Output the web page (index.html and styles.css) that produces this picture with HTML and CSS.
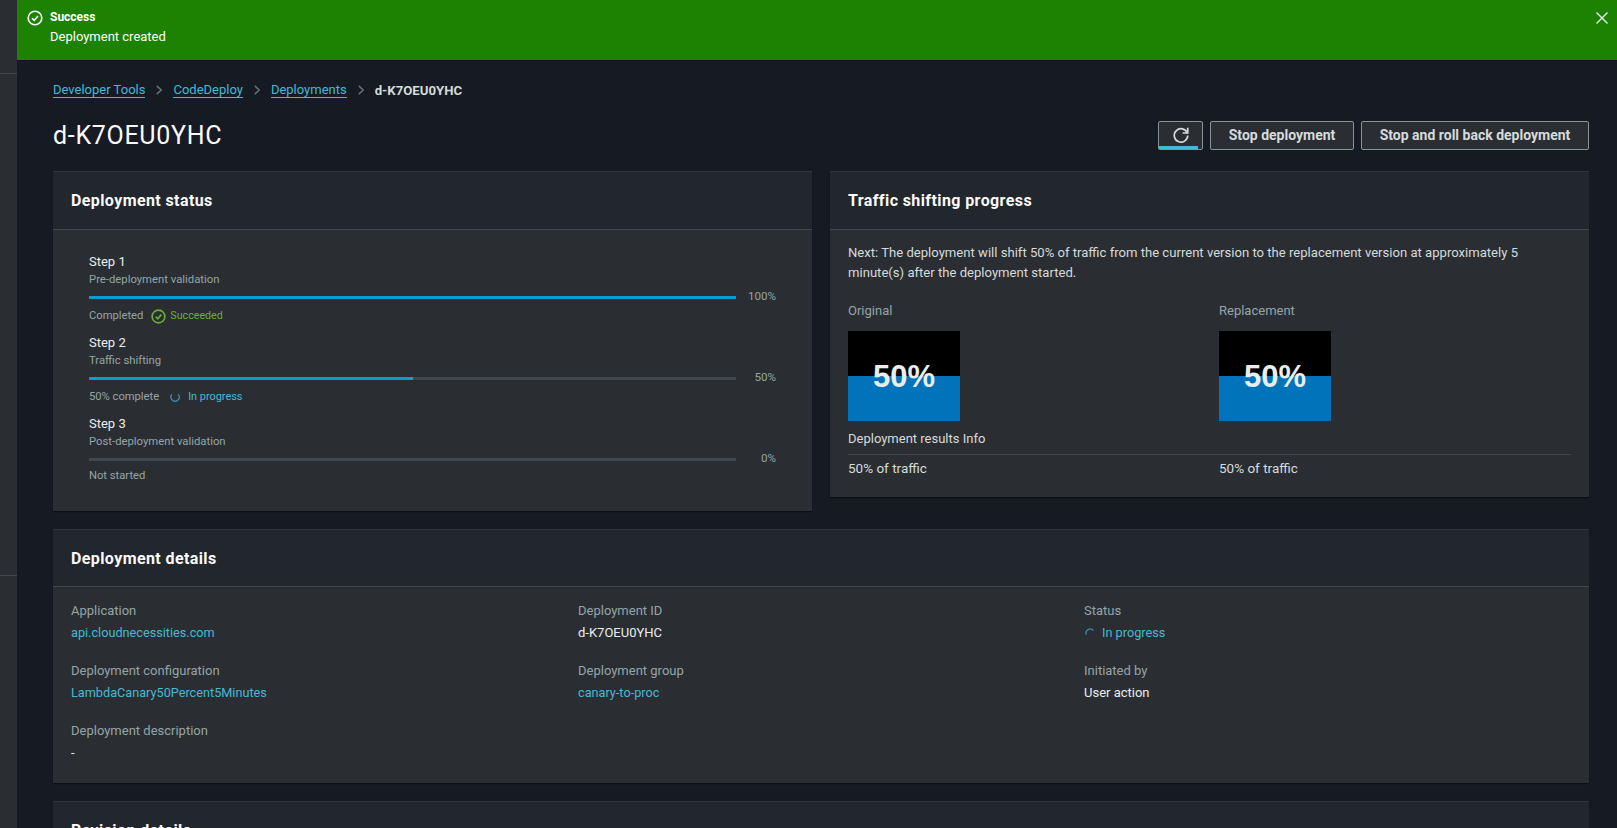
FILE: index.html
```html
<!DOCTYPE html>
<html lang="en">
<head>
  <meta charset="UTF-8">
  <title>d-K7OEU0YHC - CodeDeploy</title>
  <link rel="stylesheet" href="styles.css">
</head>
<body>
  <aside class="sidebar">
    <div class="side-top"></div>
    <div class="side-mid"></div>
    <div class="side-bottom"></div>
  </aside>

  <div class="main">
    <div class="flash">
      <svg class="flash-icon" viewBox="0 0 16 16" width="16" height="16"><circle cx="8" cy="8" r="6.8"/><path d="M5 8.2l2.2 2.2L11 6"/></svg>
      <div class="flash-text">
        <div class="flash-title">Success</div>
        <div class="flash-msg">Deployment created</div>
      </div>
      <svg class="flash-close" viewBox="0 0 16 16" width="16" height="16"><path d="M2.5 2.5l11 11M13.5 2.5l-11 11"/></svg>
    </div>

    <div class="content">
      <nav class="crumbs">
        <a href="#">Developer Tools</a>
        <svg class="chev" viewBox="0 0 16 16" width="16" height="16"><path d="M5 2.5l6 5.5-6 5.5"/></svg>
        <a href="#">CodeDeploy</a>
        <svg class="chev" viewBox="0 0 16 16" width="16" height="16"><path d="M5 2.5l6 5.5-6 5.5"/></svg>
        <a href="#">Deployments</a>
        <svg class="chev" viewBox="0 0 16 16" width="16" height="16"><path d="M5 2.5l6 5.5-6 5.5"/></svg>
        <span class="crumb-current">d-K7OEU0YHC</span>
      </nav>

      <div class="page-head">
        <h1>d-K7OEU0YHC</h1>
        <div class="actions">
          <button class="btn btn-refresh">
            <svg viewBox="0 0 16 16" width="18" height="18"><path d="M13.6 6.2A6 6 0 1 0 14 8.5"/><path d="M14 1.5v4.7H9.4"/></svg>
          </button>
          <button class="btn btn-stop">Stop deployment</button>
          <button class="btn btn-roll">Stop and roll back deployment</button>
        </div>
      </div>

      <div class="two-cols">
        <section class="card card-top">
          <h2 class="card-head">Deployment status</h2>
          <div class="steps">
            <div class="step">
              <div class="step-name">Step 1</div>
              <div class="step-desc">Pre-deployment validation</div>
              <div class="bar-row">
                <div class="bar"><div class="bar-fill" style="width: 100%"></div></div>
                <span class="bar-pct">100%</span>
              </div>
              <div class="step-status">
                <span>Completed</span>
                <span class="ok">
                  <svg viewBox="0 0 16 16" width="15" height="15"><circle cx="8" cy="8" r="6.8"/><path d="M5 8.2l2.2 2.2L11 6"/></svg>
                  Succeeded
                </span>
              </div>
            </div>
            <div class="step">
              <div class="step-name">Step 2</div>
              <div class="step-desc">Traffic shifting</div>
              <div class="bar-row">
                <div class="bar"><div class="bar-fill" style="width: 50%"></div></div>
                <span class="bar-pct">50%</span>
              </div>
              <div class="step-status">
                <span>50% complete</span>
                <span class="busy">
                  <svg class="spin-small" viewBox="0 0 12 12" width="12" height="12"><path d="M2.2 2.8A5 5 0 1 0 10 2.8"/></svg>
                  In progress
                </span>
              </div>
            </div>
            <div class="step">
              <div class="step-name">Step 3</div>
              <div class="step-desc">Post-deployment validation</div>
              <div class="bar-row">
                <div class="bar"></div>
                <span class="bar-pct">0%</span>
              </div>
              <div class="step-status step-status-last"><span>Not started</span></div>
            </div>
          </div>
        </section>

        <section class="card card-top">
          <h2 class="card-head">Traffic shifting progress</h2>
          <div class="traffic">
            <p class="traffic-next">Next: The deployment will shift 50% of traffic from the current version to the replacement version at approximately 5 minute(s) after the deployment started.</p>
            <div class="traffic-cols">
              <div>
                <div class="label">Original</div>
                <div class="gauge">50%</div>
              </div>
              <div>
                <div class="label">Replacement</div>
                <div class="gauge">50%</div>
              </div>
            </div>
            <div class="results-title">Deployment results Info</div>
            <div class="traffic-cols results-row">
              <div>50% of traffic</div>
              <div>50% of traffic</div>
            </div>
          </div>
        </section>
      </div>

      <section class="card card-details">
        <h2 class="card-head">Deployment details</h2>
        <div class="details">
          <div class="detail">
            <div class="label">Application</div>
            <a href="#">api.cloudnecessities.com</a>
          </div>
          <div class="detail">
            <div class="label">Deployment ID</div>
            <div class="value">d-K7OEU0YHC</div>
          </div>
          <div class="detail">
            <div class="label">Status</div>
            <a href="#" class="status-link">
              <svg class="spin-large" viewBox="0 0 12 12" width="12" height="12"><path d="M1.5 8A5 5 0 0 1 10 3"/></svg>
              In progress
            </a>
          </div>
          <div class="detail">
            <div class="label">Deployment configuration</div>
            <a href="#">LambdaCanary50Percent5Minutes</a>
          </div>
          <div class="detail">
            <div class="label">Deployment group</div>
            <a href="#">canary-to-proc</a>
          </div>
          <div class="detail">
            <div class="label">Initiated by</div>
            <div class="value">User action</div>
          </div>
          <div class="detail">
            <div class="label">Deployment description</div>
            <div class="value">-</div>
          </div>
        </div>
      </section>

      <section class="card">
        <h2 class="card-head">Revision details</h2>
      </section>
    </div>
  </div>
</body>
</html>
```

FILE: styles.css
```css
html, body {
  height: 828px;
  overflow: hidden;
}
body {
  margin: 0;
  display: flex;
  background: #161a22;
  color: #d5dbdb;
  font-family: Roboto, "Open Sans", sans-serif;
  font-size: 13px;
}
a {
  color: #44b9d6;
  text-decoration: none;
}
svg {
  fill: none;
  stroke: currentColor;
  stroke-width: 1.5;
}

.sidebar {
  width: 17px;
  flex: none;
  background: #2a2e33;
}
.side-top {
  height: 73px;
  border-bottom: 1px solid #414750;
}
.side-mid {
  height: 501px;
  border-bottom: 1px solid #414750;
}

.main {
  flex: 1;
  min-width: 0;
}

.flash {
  height: 61px;
  box-sizing: border-box;
  display: flex;
  align-items: flex-start;
  padding: 10px 7px 0 10px;
  background: #1d8102;
  color: #fff;
  border-bottom: 1px solid #10151a;
}
.flash-icon {
  margin: 0 7px 0 0;
  stroke-width: 1.6;
}
.flash-text {
  flex: 1;
  line-height: 20px;
}
.flash-title {
  font-size: 12px;
  font-weight: 700;
  margin-top: -3px;
}
.flash-close {
  color: #e8eded;
  width: 16px;
  height: 16px;
  stroke-width: 1.4;
}

.content {
  padding: 0 28px 0 36px;
}

.crumbs {
  display: flex;
  align-items: center;
  height: 22px;
  margin-top: 18px;
}
.crumbs a {
  border-bottom: 1px solid #44b9d6;
  line-height: 15px;
}
.chev {
  width: 12px;
  height: 12px;
  margin: 0 8px;
  color: #687078;
  stroke-width: 2;
}
.crumb-current {
  font-weight: 700;
  font-size: 13.2px;
}

.page-head {
  display: flex;
  justify-content: space-between;
  align-items: center;
  margin-top: 19px;
  height: 30px;
}
h1 {
  margin: 0;
  font-size: 25px;
  font-weight: 400;
  letter-spacing: 0.7px;
  color: #fafafa;
}
.actions {
  display: flex;
  gap: 7px;
}
.btn {
  height: 29px;
  box-sizing: border-box;
  padding: 0;
  background: #2a2e33;
  border: 1px solid #879596;
  border-radius: 2px;
  color: #d5dbdb;
  font-family: inherit;
  font-size: 14px;
  font-weight: 700;
}
.btn-refresh {
  width: 45px;
  display: flex;
  align-items: center;
  justify-content: center;
  background: #2a2e33 linear-gradient(#44b9d6, #44b9d6) no-repeat left bottom / 39px 3px;
}
.btn-stop {
  width: 144px;
}
.btn-roll {
  width: 228px;
}

.two-cols {
  display: grid;
  grid-template-columns: 759px 759px;
  gap: 18px;
  align-items: start;
  margin-top: 21px;
}
.card {
  background: #2a2e33;
  border-top: 1px solid #31353b;
  box-shadow: 0 1px 1px #0c0f14;
}
.card-head {
  margin: 0;
  height: 57px;
  box-sizing: border-box;
  padding: 0 18px;
  display: flex;
  align-items: center;
  background: #22262d;
  border-bottom: 1px solid #414750;
  font-size: 16px;
  font-weight: 700;
  letter-spacing: 0.4px;
  color: #fafafa;
}
.card-top .card-head {
  height: 58px;
}

.steps {
  padding: 23px 36px 0;
  height: 281px;
  box-sizing: border-box;
}
.step {
  height: 81px;
}
.step-name {
  line-height: 18px;
  color: #eaeded;
}
.step-desc {
  font-size: 11.3px;
  line-height: 17px;
  color: #95a5a6;
}
.bar-row {
  display: flex;
  align-items: center;
  height: 18px;
  gap: 12px;
}
.bar {
  width: 647px;
  height: 3px;
  background: #414750;
}
.bar-fill {
  height: 100%;
  background: #00a1c9;
}
.bar-pct {
  width: 28px;
  margin-top: -2px;
  text-align: right;
  font-size: 11.6px;
  color: #95a5a6;
}
.step-status {
  display: flex;
  align-items: center;
  gap: 8px;
  margin-top: 1px;
  font-size: 11.2px;
  line-height: 18px;
  color: #95a5a6;
}
.step-status-last {
  margin-top: -1px;
}
.ok, .busy {
  display: flex;
  align-items: center;
  gap: 4px;
}
.ok {
  color: #6aaf35;
  font-size: 10.7px;
}
.ok svg {
  stroke-width: 1.8;
}
.busy {
  color: #44b9d6;
  font-size: 10.9px;
  gap: 8px;
  margin-left: 3px;
}
.spin-small {
  width: 10px;
  height: 10px;
  stroke: #3f8ea5;
}

.traffic {
  padding: 13px 18px 0;
  height: 267px;
  box-sizing: border-box;
}
.traffic-next {
  margin: 0;
  font-size: 13.1px;
  line-height: 20px;
  color: #d5dbdb;
}
.traffic-cols {
  display: grid;
  grid-template-columns: 371px 1fr;
}
.traffic-cols > div {
  min-width: 0;
}
.traffic-cols .label {
  margin-top: 19px;
  line-height: 18px;
}
.label {
  color: #95a5a6;
}
.gauge {
  width: 112px;
  height: 90px;
  margin-top: 11px;
  padding-top: 2px;
  box-sizing: border-box;
  display: flex;
  align-items: center;
  justify-content: center;
  background: linear-gradient(#000 50%, #0073bb 50%);
  font-family: "Liberation Sans", sans-serif;
  font-size: 31px;
  font-weight: 700;
  color: #eaeded;
}
.results-title {
  margin-top: 8px;
  line-height: 20px;
}
.results-row {
  margin-top: 5px;
  padding-top: 4px;
  border-top: 1px solid #414750;
  font-size: 13.5px;
  line-height: 18px;
}

.card-details {
  margin-top: 18px;
}
.details {
  display: grid;
  grid-template-columns: 507px 506px 1fr;
  grid-auto-rows: 60px;
  padding: 15px 18px 0;
  height: 196px;
  box-sizing: border-box;
}
.detail {
  line-height: 18px;
}
.detail a {
  font-size: 12.7px;
}
.detail .label {
  margin-bottom: 4px;
}
.status-link {
  display: flex;
  align-items: center;
  gap: 7px;
}
.spin-large {
  width: 10px;
  height: 10px;
  margin-left: 1px;
  stroke: #3f8ea5;
}
.value {
  color: #eaeded;
}

.card-details + .card {
  margin-top: 18px;
}
```
